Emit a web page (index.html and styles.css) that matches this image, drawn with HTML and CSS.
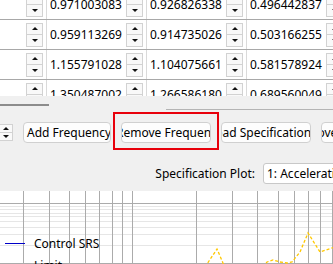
FILE: index.html
```html
<!DOCTYPE html>
<html lang="en">
<head>
    <meta charset="UTF-8">
    <title>Specification Editor</title>
    <link rel="stylesheet" href="styles.css">
</head>
<body>
    <!-- Table of values -->
    <div class="grid">
        <div class="grid-body">
            <div class="row">
                <div class="cell first"><div class="spin"><span class="up"></span><span class="down"></span></div></div>
                <div class="cell"><div class="value">0.971003083</div><div class="spin"><span class="up"></span><span class="down"></span></div></div>
                <div class="cell"><div class="value">0.926826338</div><div class="spin"><span class="up"></span><span class="down"></span></div></div>
                <div class="cell"><div class="value">0.496442837</div><div class="spin"><span class="up"></span><span class="down"></span></div></div>
            </div>
            <div class="row">
                <div class="cell first"><div class="spin"><span class="up"></span><span class="down"></span></div></div>
                <div class="cell"><div class="value">0.959113269</div><div class="spin"><span class="up"></span><span class="down"></span></div></div>
                <div class="cell"><div class="value">0.914735026</div><div class="spin"><span class="up"></span><span class="down"></span></div></div>
                <div class="cell"><div class="value">0.503166255</div><div class="spin"><span class="up"></span><span class="down"></span></div></div>
            </div>
            <div class="row">
                <div class="cell first"><div class="spin"><span class="up"></span><span class="down"></span></div></div>
                <div class="cell"><div class="value">1.155791028</div><div class="spin"><span class="up"></span><span class="down"></span></div></div>
                <div class="cell"><div class="value">1.104075661</div><div class="spin"><span class="up"></span><span class="down"></span></div></div>
                <div class="cell"><div class="value">0.581578924</div><div class="spin"><span class="up"></span><span class="down"></span></div></div>
            </div>
            <div class="row">
                <div class="cell first"><div class="spin"><span class="up"></span><span class="down"></span></div></div>
                <div class="cell"><div class="value">1.350487002</div><div class="spin"><span class="up"></span><span class="down"></span></div></div>
                <div class="cell"><div class="value">1.266586180</div><div class="spin"><span class="up"></span><span class="down"></span></div></div>
                <div class="cell"><div class="value">0.689560049</div><div class="spin"><span class="up"></span><span class="down"></span></div></div>
            </div>
        </div>
    </div>

    <!-- Scroll area -->
    <div class="hscroll">
        <div class="thumb"></div>
        <div class="track"></div>
    </div>

    <!-- Buttons -->
    <div class="toolbar">
        <div class="spin small"><span class="up"></span><span class="down"></span></div>
        <div class="btn w-add">Add Frequency</div>
        <div class="marked">
            <div class="btn w-remove">Remove Frequency</div>
        </div>
        <div class="btn w-load">Load Specification</div>
        <div class="btn w-save">Remove Specification</div>
    </div>

    <!-- Plot selector -->
    <div class="plot-bar">
        <label>Specification Plot:</label>
        <div class="combo">1: Acceleration</div>
    </div>

    <!-- Plot -->
    <div class="plot">
        <svg width="333" height="73" viewBox="0 0 333 73">
            <g stroke="#e6e6e6" stroke-width="1">
                <line x1="0" y1="15.5" x2="333" y2="15.5"/>
                <line x1="0" y1="18.5" x2="333" y2="18.5"/>
                <line x1="0" y1="22.5" x2="333" y2="22.5"/>
                <line x1="0" y1="25.5" x2="333" y2="25.5"/>
                <line x1="0" y1="30.5" x2="333" y2="30.5"/>
                <line x1="0" y1="36.5" x2="333" y2="36.5"/>
                <line x1="0" y1="43.5" x2="333" y2="43.5"/>
                <line x1="0" y1="54.5" x2="333" y2="54.5"/>
            </g>
            <g stroke="#ababab" stroke-width="1">
                <line x1="0" y1="12.5" x2="333" y2="12.5"/>
                <line x1="0" y1="72.5" x2="333" y2="72.5"/>
                <line x1="23.5" y1="0" x2="23.5" y2="73"/>
                <line x1="49.5" y1="0" x2="49.5" y2="73"/>
                <line x1="69.5" y1="0" x2="69.5" y2="73"/>
                <line x1="85.5" y1="0" x2="85.5" y2="73"/>
                <line x1="99.5" y1="0" x2="99.5" y2="73"/>
                <line x1="112.5" y1="0" x2="112.5" y2="73"/>
                <line x1="122.5" y1="0" x2="122.5" y2="73"/>
                <line x1="132.5" y1="0" x2="132.5" y2="73"/>
                <line x1="196.5" y1="0" x2="196.5" y2="73"/>
                <line x1="232.5" y1="0" x2="232.5" y2="73"/>
                <line x1="257.5" y1="0" x2="257.5" y2="73"/>
                <line x1="278.5" y1="0" x2="278.5" y2="73"/>
                <line x1="294.5" y1="0" x2="294.5" y2="73"/>
                <line x1="308.5" y1="0" x2="308.5" y2="73"/>
                <line x1="320.5" y1="0" x2="320.5" y2="73"/>
                <line x1="332.5" y1="0" x2="332.5" y2="73"/>
            </g>
            <g fill="none" stroke="#ffc800" stroke-width="1.3" stroke-dasharray="3 2">
                <polyline points="205,76 209,70 217,58 223,72 225,76"/>
                <polyline points="263,76 267,71 273,69 280,71 287,72 292,71 300,61 308,42 320,61 332,57 340,54"/>
            </g>
        </svg>
        <div class="legend">
            <div class="legend-item"><i class="swatch"></i>Control SRS</div>
            <div class="legend-item"><i></i>Limit</div>
        </div>
    </div>
</body>
</html>
```

FILE: styles.css
```css
/* Base */
* {
    margin: 0;
    padding: 0;
    box-sizing: border-box;
}

body {
    width: 333px;
    height: 264px;
    overflow: hidden;
    background: #f0f0f0;
    font-family: "Noto Sans", "Open Sans", sans-serif;
    font-size: 12px;
    color: #000;
}

/* Table */
.grid {
    height: 96px;
    background: #fff;
    overflow: hidden;
}

.grid-body {
    margin-top: -10px;
}

.row {
    display: flex;
    height: 30px;
    border-bottom: 1px solid #a8a8a8;
}

.cell {
    flex: none;
    width: 100px;
    display: flex;
    align-items: center;
    padding: 0 3px;
    border-right: 1px solid #dadada;
}

.cell.first {
    width: 47px;
    justify-content: flex-end;
}

.value {
    flex: 1;
    overflow: hidden;
    white-space: nowrap;
    line-height: 16px;
}

.spin {
    flex: none;
    width: 17px;
    height: 24px;
    display: flex;
    flex-direction: column;
    border: 1px solid #d2d2d2;
    background: #f9f9f9;
}

.spin span {
    flex: 1;
    display: flex;
    align-items: center;
    justify-content: center;
}

.spin span + span {
    border-top: 1px solid #d2d2d2;
}

.spin .up::before,
.spin .down::before {
    content: '';
    border-left: 3px solid transparent;
    border-right: 3px solid transparent;
}

.spin .up::before {
    border-bottom: 3px solid #111;
}

.spin .down::before {
    border-top: 3px solid #111;
}

.spin.small {
    width: 13px;
    height: 17px;
    margin-top: 2px;
    border-left: none;
}

/* Scroll area */
.hscroll {
    height: 26px;
    position: relative;
}

.thumb {
    position: absolute;
    left: 0;
    top: 8px;
    width: 49px;
    height: 2px;
    background: #8c8c8c;
}

.track {
    position: absolute;
    left: 166px;
    right: 0;
    top: 13px;
    height: 1px;
    background: #b4b4b4;
}

/* Buttons */
.toolbar {
    height: 21px;
    display: flex;
    gap: 10px;
}

.btn {
    flex: none;
    width: 90px;
    height: 21px;
    line-height: 19px;
    padding: 0 3px;
    white-space: nowrap;
    overflow: hidden;
    background: #fdfdfd;
    border: 1px solid #d0d0d0;
    border-radius: 4px;
}

.w-add {
    width: 88px;
}

.w-remove {
    text-indent: -9px;
}

.w-load {
    text-indent: -16px;
}

.w-save {
    text-indent: -33px;
}

.marked {
    flex: none;
    position: relative;
}

.marked::after {
    content: '';
    position: absolute;
    left: -8px;
    right: -8px;
    top: -10px;
    bottom: -7px;
    border: 2px solid #e8000b;
}

/* Plot selector */
.plot-bar {
    height: 48px;
    padding-top: 20px;
    display: flex;
    justify-content: flex-end;
    gap: 8px;
    overflow: hidden;
}

.plot-bar label {
    line-height: 21px;
    flex: none;
}

.combo {
    flex: none;
    width: 77px;
    height: 21px;
    line-height: 19px;
    padding-left: 3px;
    margin-right: -7px;
    background: #fff;
    border: 1px solid #c8c8c8;
    border-radius: 3px;
    white-space: nowrap;
    overflow: hidden;
}

/* Plot */
.plot {
    height: 73px;
    background: #fff;
    position: relative;
    overflow: hidden;
}

.plot svg {
    display: block;
}

.legend {
    position: absolute;
    left: 5px;
    top: 44px;
}

.legend-item {
    display: flex;
    align-items: center;
    gap: 9px;
    height: 16px;
    margin-bottom: 6px;
}

.legend-item i {
    width: 20px;
    height: 1px;
}

.legend-item .swatch {
    background: #0000c8;
}
```
